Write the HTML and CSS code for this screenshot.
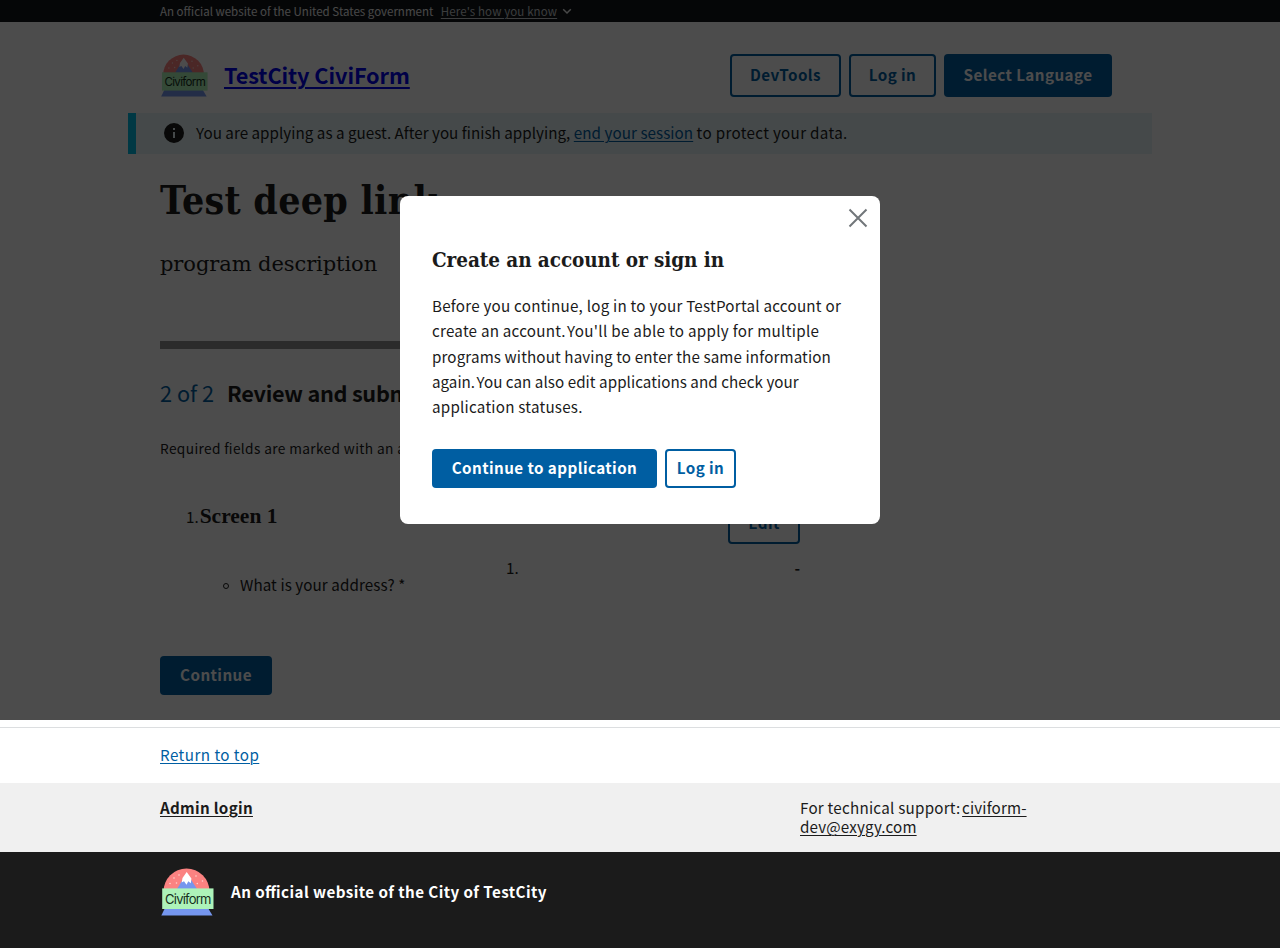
FILE: index.html
```html
<!DOCTYPE html>
<html lang="en">
<head>
<meta charset="utf-8">
<title>TestCity CiviForm</title>
<link rel="stylesheet" href="styles.css">
</head>
<body>
<svg class="defs" width="0" height="0" aria-hidden="true">
  <symbol id="logo" viewBox="0 0 54 48">
    <path d="M3.500 23.500a23 23 0 0 1 46 0z" fill="#fb8281"/>
    <path d="M17 21 26.700 5 37 21z" fill="#7596ee"/>
    <path d="M26.700 4 22.500 10 21.700 14.500 24 13.200 26.500 16.800 28.300 13.200 30.800 15.200 31.400 10.500z" fill="#fff"/>
    <g fill="#ffd3cf"><circle cx="14" cy="10" r=".8"/><circle cx="19" cy="7" r=".8"/><circle cx="36" cy="8" r=".8"/><circle cx="42.500" cy="13" r=".8"/><circle cx="10" cy="15.500" r=".8"/><circle cx="16.500" cy="15" r=".8"/><circle cx="37.300" cy="15.500" r=".8"/></g>
    <path d="M5 40h43l4.500 7.600H1.300z" fill="#7596ee"/>
    <rect x="2.200" y="20.400" width="51.300" height="20.600" fill="#adf3b9"/>
    <text x="5" y="35.600" textLength="46.500" lengthAdjust="spacing" class="logo-text">Civiform</text>
  </symbol>
</svg>

<div class="banner">
  <span class="banner-text">An official website of the United States government</span>
  <a class="banner-link" href="#">Here's how you know</a>
  <svg class="chevron" viewBox="0 0 10 10"><path d="M1.200 3.200 5 7 8.800 3.200" fill="none" stroke="currentColor" stroke-width="1.500"/></svg>
</div>

<header class="header">
  <svg class="header-logo"><use href="#logo"/></svg>
  <a class="site-title" href="#">TestCity CiviForm</a>
  <nav class="header-nav">
    <button class="btn outline devtools">DevTools</button>
    <button class="btn outline login">Log in</button>
    <button class="btn language">Select Language</button>
  </nav>
</header>

<div class="alert">
  <svg class="info" viewBox="0 0 24 24"><path d="M12 2a10 10 0 1 0 0 20 10 10 0 0 0 0-20zm1 15h-2v-6h2zm0-8h-2V7h2z" fill="#1b1b1b"/></svg>
  <p class="alert-text"><span class="a1">You are applying as a guest. After you finish applying,</span> <a class="a2" href="#">end your session</a> <span class="a3">to protect your data.</span></p>
</div>

<main class="main">
  <h1 class="title">Test deep link</h1>
  <p class="description">program description</p>
  <div class="progress"></div>
  <h2 class="step"><span class="count">2 of 2</span><span class="step-name">Review and submit</span></h2>
  <p class="required">Required fields are marked with an asterisk (*).</p>
  <div class="screen">
    <span class="marker">1.</span>
    <h3 class="screen-name">Screen 1</h3>
    <button class="btn outline edit">Edit</button>
  </div>
  <div class="question">
    <span class="bullet"></span>
    <p class="question-text">What is your address? *</p>
    <span class="answer-no">1.</span>
    <span class="answer">-</span>
  </div>
  <button class="btn continue">Continue</button>
</main>

<footer>
  <div class="return"><a class="return-link" href="#">Return to top</a></div>
  <div class="support">
    <div class="admin"><a href="#">Admin login</a></div>
    <p class="contact"><span class="contact-label">For technical support:</span> <a href="#">civiform-<br>dev@exygy.com</a></p>
  </div>
  <div class="identifier">
    <svg class="footer-logo"><use href="#logo"/></svg>
    <span class="official">An official website of the City of TestCity</span>
  </div>
</footer>

<div class="overlay">
  <section class="modal" role="dialog">
    <svg class="close" viewBox="0 0 20 20"><path d="M1.500 1.500 18.500 18.500M18.500 1.500 1.500 18.500" stroke="#71767a" stroke-width="2" fill="none"/></svg>
    <h2 class="modal-title">Create an account or sign in</h2>
    <p class="modal-body">
      <span class="wide">Before you continue, log in to your TestPortal account or</span><br>
      <span class="wide sentence">create an account.</span> <span class="wider">You'll be able to apply for multiple</span><br>
      <span class="snug">programs without having to enter the same information</span><br>
      <span class="sentence">again.</span> <span class="tight">You can also edit applications and check your</span><br>
      <span class="wide">application statuses.</span>
    </p>
    <div class="modal-actions">
      <button class="btn proceed">Continue to application</button>
      <button class="btn outline sign-in">Log in</button>
    </div>
  </section>
</div>
</body>
</html>
```
FILE: styles.css
```css
* { box-sizing: border-box; }
body {
  margin: 0;
  height: 948px;
  overflow: hidden;
  background: #fff;
  color: #1b1b1b;
  font: 15.2px/24px "Noto Sans CJK SC", "Open Sans", sans-serif;
  font-feature-settings: "liga" 1;
  white-space: nowrap;
}
h1, h2, h3, p { margin: 0; }
a { color: #005ea2; text-underline-offset: 2px; text-decoration-thickness: 1px; }
.defs { display: none; }
.logo-text { font: 13px Inter, "Liberation Sans", sans-serif; letter-spacing: 0; fill: #16301d; }

/* Government banner */
.banner {
  display: flex;
  align-items: center;
  height: 22px;
  padding-left: 160px;
  background: #11161a;
  color: #f0f0f0;
  font-size: 11.5px;
}
.banner-text { letter-spacing: .01px; }
.banner-link { margin-left: 7.5px; color: #c5c9cc; letter-spacing: .12px; }
.chevron { width: 10px; height: 10px; margin-left: 5px; }

/* Header */
.header { display: flex; align-items: center; height: 91px; padding: 16px 168px 0 160px; }
.header-logo { width: 48px; height: 43px; margin-top: -1px; }
.site-title {
  margin: -1px 0 0 16px;
  font-size: 21.7px;
  font-weight: 700;
  letter-spacing: -.08px;
  color: #0000ee;
  text-underline-offset: 3px;
  text-decoration-thickness: 2px;
}
.header-nav { display: flex; gap: 8px; margin-left: auto; }

.btn {
  display: flex;
  align-items: center;
  justify-content: center;
  height: 43px;
  padding: 0 0 4px;
  border: 0;
  border-radius: 4px;
  background: #005ea2;
  color: #fff;
  font: 700 15.2px/20px "Noto Sans CJK SC", "Open Sans", sans-serif;
  letter-spacing: .43px;
}
.outline { background: transparent; color: #005ea2; border: 2px solid #005ea2; }
.devtools { width: 111px; }
.login { width: 87px; }
.language { width: 168px; }

/* Guest session alert */
.alert {
  display: flex;
  align-items: center;
  height: 41px;
  margin: 0 128px;
  padding: 0 0 2px 26px;
  border-left: 8px solid #00bde3;
  background: #e7f6f8;
}
.info { width: 24px; height: 24px; margin-right: 10px; }
.alert-text { margin-top: -1px; }
.a1 { letter-spacing: .03px; }
.a2 { letter-spacing: .06px; }
.a3 { letter-spacing: .32px; }

/* Application summary */
.main { height: 566px; padding: 0 160px; }
.title { height: 92px; font: 700 39px/92px "DejaVu Serif Condensed", "DejaVu Serif", serif; letter-spacing: .25px; }
.description { height: 36px; font: 21px/36px "DejaVu Serif", serif; letter-spacing: -.08px; }
.progress { width: 640px; height: 8px; margin-top: 59px; background: #919191; }
.step { display: flex; gap: 13px; height: 36px; margin-top: 26px; font-size: 21.7px; line-height: 36px; }
.count { color: #005ea2; font-weight: 400; }
.step-name { letter-spacing: -.27px; }
.required { margin-top: 25px; font-size: 13.7px; letter-spacing: .37px; }
.screen { display: flex; align-items: center; width: 640px; height: 40px; margin-top: 44px; padding-left: 26px; }
.marker { margin-right: 1px; margin-top: -17px; }
.screen-name { margin-top: -17px; font: 700 21.5px/26px "Liberation Serif", serif; }
.edit { width: 72px; height: 39px; margin-left: auto; }
.question { display: flex; align-items: flex-start; width: 640px; height: 44px; margin-top: 11px; padding-left: 63px; }
.bullet { width: 6px; height: 6px; margin: 28px 11px 0 0; border: 1px solid #1b1b1b; border-radius: 50%; }
.question-text { width: 266px; margin-top: 17px; letter-spacing: .08px; }
.answer { margin-left: auto; font-weight: 700; }
.continue { width: 112px; height: 39px; margin-top: 57px; }

/* Footer */
.return { height: 63px; padding: 22px 160px 0; box-shadow: inset 0 7px #fff, inset 0 8px #dcdee0; }
.return-link { letter-spacing: .45px; }
.support { display: flex; height: 69px; padding: 15px 160px 0; background: #f0f0f0; line-height: 19px; }
.admin { width: 640px; font-weight: 700; letter-spacing: .3px; }
.support a { color: #1b1b1b; }
.contact { letter-spacing: .14px; }
.contact-label { margin-right: -2px; letter-spacing: .24px; }
.identifier { display: flex; height: 96px; padding: 16px 160px 0; background: #1b1b1b; color: #fff; font-weight: 700; }
.footer-logo { width: 54px; height: 48px; }
.official { margin: 11px 0 0 17px; letter-spacing: .42px; }

/* Sign-in modal */
.overlay {
  position: absolute;
  top: 0;
  left: 0;
  width: 100%;
  height: 720px;
  display: flex;
  align-items: center;
  justify-content: center;
  background: rgba(0, 0, 0, .7);
}
.modal { display: flex; flex-direction: column; width: 480px; height: 328px; padding: 12px 12px 0 32px; border-radius: 8px; background: #fff; }
.close { width: 20px; height: 20px; align-self: flex-end; }
.modal-title { margin-top: 16px; font: 700 20.5px/32px "DejaVu Serif Condensed", "DejaVu Serif", serif; letter-spacing: -.07px; }
.modal-body { margin-top: 17px; line-height: 25.3px; }
.wide { letter-spacing: .23px; }
.wider { letter-spacing: .3px; }
.snug { letter-spacing: .115px; }
.tight { letter-spacing: .05px; }
.sentence { margin-right: -2px; }
.modal-actions { display: flex; gap: 8px; margin-top: 30px; }
.proceed { width: 225px; height: 39px; }
.sign-in { width: 71px; height: 39px; }
```
